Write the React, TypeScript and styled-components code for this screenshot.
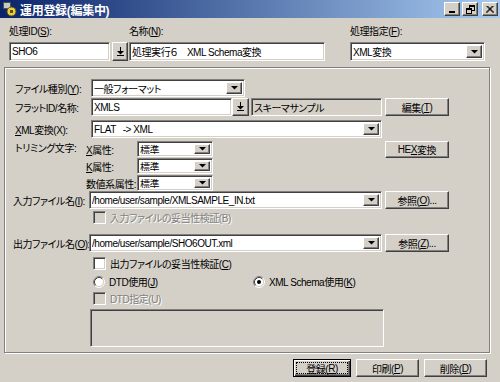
import React from "react";
import styled, { createGlobalStyle, css } from "styled-components";

const face = "#d4d0c8";

const GlobalStyle = createGlobalStyle`
  * { box-sizing: border-box; }
  html, body { margin: 0; padding: 0; background: ${face}; }
  body {
    font-family: "Liberation Sans", "Noto Sans CJK JP", sans-serif;
    font-size: 10px;
    letter-spacing: -0.45px;
    font-feature-settings: "palt";
    color: #000;
  }
  u { text-underline-offset: 1px; }
`;

const raised = css`
  background: ${face};
  border: 1px solid;
  border-color: #fff #404040 #404040 #fff;
  box-shadow: inset -1px -1px #808080;
`;

const sunken = css`
  border: 1px solid;
  border-color: #808080 #fff #fff #808080;
  box-shadow: inset 1px 1px #404040, inset -1px -1px ${face};
`;

const Window = styled.div`
  width: 500px;
  height: 382px;
  display: flex;
  flex-direction: column;
  background: ${face};
  overflow: hidden;
`;

const TitleBar = styled.div`
  height: 18px;
  flex: none;
  display: flex;
  align-items: center;
  gap: 2px;
  padding: 0 2px;
  background: linear-gradient(to right, #0a246a, #a6caf0);
`;

const TitleText = styled.div`
  flex: 1;
  color: #fff;
  font-weight: bold;
  font-size: 12px;
  letter-spacing: -0.3px;
  white-space: nowrap;
`;

const CaptionButton = styled.div<{ $gap?: boolean }>`
  ${raised}
  width: 16px;
  height: 14px;
  display: flex;
  align-items: center;
  justify-content: center;
  margin-left: ${(p) => (p.$gap ? 2 : 0)}px;
`;

const TopRow = styled.div`
  display: flex;
  padding: 7px 0 0 9px;
`;

const Field = styled.div<{ $w: number; $ml?: number }>`
  width: ${(p) => p.$w}px;
  margin-left: ${(p) => p.$ml ?? 0}px;
  display: flex;
  flex-direction: column;
  gap: 4px;
`;

const FieldLabel = styled.div`
  height: 13px;
  line-height: 13px;
  white-space: nowrap;
`;

const Inline = styled.div`
  display: flex;
  align-items: stretch;
`;

const TextBox = styled.div<{ $w?: number; $h?: number; $grey?: boolean; $ml?: number }>`
  ${sunken}
  background: ${(p) => (p.$grey ? face : "#fff")};
  height: ${(p) => p.$h ?? 18}px;
  ${(p) => (p.$w ? `width: ${p.$w}px; flex: none;` : "flex: 1;")}
  margin-left: ${(p) => p.$ml ?? 0}px;
  display: flex;
  align-items: center;
  padding: 0 2px;
  white-space: pre;
  overflow: hidden;
`;

const ComboBox = styled.div<{ $w?: number; $h?: number }>`
  ${sunken}
  background: #fff;
  height: ${(p) => p.$h ?? 18}px;
  ${(p) => (p.$w ? `width: ${p.$w}px;` : "width: 100%;")}
  display: flex;
  align-items: stretch;
  padding: 2px;
`;

const ComboText = styled.div`
  flex: 1;
  display: flex;
  align-items: center;
  white-space: pre;
  overflow: hidden;
`;

const DropButton = styled.div`
  ${raised}
  width: 16px;
  flex: none;
  display: flex;
  align-items: center;
  justify-content: center;
`;

const PickButton = styled.div<{ $w?: number }>`
  ${raised}
  width: ${(p) => p.$w ?? 17}px;
  flex: none;
  display: flex;
  align-items: center;
  justify-content: center;
`;

const Group = styled.div`
  margin: 6px 0 0 4px;
  width: 486px;
  height: 286px;
  flex: none;
  border: 1px solid #808080;
  box-shadow: inset 1px 1px #fff, 1px 1px #fff;
  padding: 11px 40px 0 10px;
  display: flex;
  flex-direction: column;
`;

const Row = styled.div<{ $label: number; $mt?: number }>`
  display: grid;
  grid-template-columns: ${(p) => p.$label}px 1fr 67px;
  align-items: center;
  margin-top: ${(p) => p.$mt ?? 0}px;
`;

const RowLabel = styled.div<{ $top?: boolean; $ml?: number }>`
  white-space: nowrap;
  margin-left: ${(p) => p.$ml ?? 0}px;
  ${(p) => p.$top && "align-self: start; line-height: 16px;"}
`;

const Main = styled.div`
  display: flex;
  align-items: stretch;
`;

const TrimGrid = styled.div`
  display: grid;
  grid-template-columns: 51px 76px;
  grid-auto-rows: 16px;
  row-gap: 1px;
  align-items: center;
`;

const Button = styled.div<{ $w: number; $h?: number; $default?: boolean; $top?: boolean }>`
  width: ${(p) => p.$w}px;
  height: ${(p) => p.$h ?? 18}px;
  justify-self: end;
  ${(p) => p.$top && "align-self: start;"}
  display: flex;
  align-items: stretch;
  white-space: nowrap;
  ${(p) =>
    p.$default
      ? css`
          background: ${face};
          border: 1px solid #000;
          box-shadow: inset 1px 1px #fff, inset -1px -1px #404040, inset -2px -2px #808080;
          padding: 3px;
        `
      : raised}
`;

const ButtonFace = styled.div<{ $focus?: boolean }>`
  flex: 1;
  display: flex;
  align-items: center;
  justify-content: center;
  ${(p) => p.$focus && "outline: 1px dotted #000;"}
`;

const CheckRow = styled.div<{ $mt: number }>`
  display: flex;
  align-items: center;
  height: 13px;
  margin: ${(p) => p.$mt}px 0 0 78px;
`;

const Option = styled.div<{ $w?: number }>`
  display: flex;
  align-items: center;
  gap: 4px;
  ${(p) => p.$w && `width: ${p.$w}px;`}
`;

const CheckBox = styled.div<{ $disabled?: boolean }>`
  ${sunken}
  width: 13px;
  height: 13px;
  flex: none;
  background: ${(p) => (p.$disabled ? face : "#fff")};
`;

const OptionText = styled.span<{ $disabled?: boolean }>`
  white-space: nowrap;
  ${(p) => p.$disabled && "color: #808080; text-shadow: 1px 1px #fff;"}
`;

const Memo = styled.div`
  ${sunken}
  background: ${face};
  width: 294px;
  height: 38px;
  margin: 4px 0 0 75px;
`;

const Footer = styled.div`
  display: flex;
  justify-content: flex-end;
  gap: 5px;
  padding: 6px 13px 0 0;
`;

const Triangle = () => (
  <svg width="7" height="4" viewBox="0 0 7 4">
    <polygon points="0,0 7,0 3.5,3.5" fill="#000" />
  </svg>
);

const PickIcon = () => (
  <svg width="9" height="10" viewBox="0 0 9 10">
    <rect x="4" y="0" width="1" height="4" fill="#000" />
    <polygon points="1,4 8,4 4.5,7.5" fill="#000" />
    <rect x="1" y="8" width="7" height="1" fill="#000" />
  </svg>
);

const Radio = ({ checked }: { checked?: boolean }) => (
  <svg width="12" height="12" viewBox="0 0 12 12">
    <circle cx="6" cy="6" r="4.5" fill="#fff" />
    <path d="M2.11 9.89A5.5 5.5 0 0 1 9.89 2.11" stroke="#808080" fill="none" />
    <path d="M9.89 2.11A5.5 5.5 0 0 1 2.11 9.89" stroke="#fff" fill="none" />
    <path d="M2.82 9.18A4.5 4.5 0 0 1 9.18 2.82" stroke="#404040" fill="none" />
    <path d="M9.18 2.82A4.5 4.5 0 0 1 2.82 9.18" stroke={face} fill="none" />
    {checked && <circle cx="6" cy="6" r="2" fill="#000" />}
  </svg>
);

const AppIcon = () => (
  <svg width="16" height="16" viewBox="0 0 16 16">
    <rect x="1.5" y="1.5" width="7" height="6" fill="#c8c8c8" stroke="#505050" />
    <circle cx="9.5" cy="10.5" r="4.5" fill="#e8d040" stroke="#605010" />
    <rect x="8" y="9" width="3" height="3" fill="#605010" />
  </svg>
);

const Combo = ({ value, w, h }: { value: string; w?: number; h?: number }) => (
  <ComboBox $w={w} $h={h}>
    <ComboText>{value}</ComboText>
    <DropButton>
      <Triangle />
    </DropButton>
  </ComboBox>
);

function App() {
  return (
    <Window>
      <GlobalStyle />
      <TitleBar>
        <AppIcon />
        <TitleText>運用登録(編集中)</TitleText>
        <CaptionButton>
          <svg width="8" height="7" viewBox="0 0 8 7">
            <rect x="1" y="5" width="6" height="2" fill="#000" />
          </svg>
        </CaptionButton>
        <CaptionButton>
          <svg width="9" height="9" viewBox="0 0 9 9">
            <rect x="3.5" y="0.5" width="5" height="5" fill="none" stroke="#000" />
            <rect x="3" y="0" width="6" height="2" fill="#000" />
            <rect x="0.5" y="3.5" width="5" height="5" fill={face} stroke="#000" />
            <rect x="0" y="3" width="6" height="2" fill="#000" />
          </svg>
        </CaptionButton>
        <CaptionButton $gap>
          <svg width="8" height="7" viewBox="0 0 8 7">
            <path d="M0.5 0 L7.5 7 M1.5 0 L8 6.5 M7.5 0 L0.5 7 M6.5 0 L0 6.5" stroke="#000" strokeWidth="1" />
          </svg>
        </CaptionButton>
      </TitleBar>

      <TopRow>
        <Field $w={119}>
          <FieldLabel>
            処理ID(<u>S</u>):
          </FieldLabel>
          <Inline>
            <TextBox $w={101} $h={19}>SHO6</TextBox>
            <PickButton $w={16} style={{ marginLeft: 2 }}>
              <PickIcon />
            </PickButton>
          </Inline>
        </Field>
        <Field $w={196} $ml={1}>
          <FieldLabel>
            名称(<u>N</u>):
          </FieldLabel>
          <TextBox $h={19}>処理実行６　XML Schema変換</TextBox>
        </Field>
        <Field $w={135} $ml={25}>
          <FieldLabel>
            処理指定(<u>F</u>):
          </FieldLabel>
          <Combo value="XML変換" h={19} />
        </Field>
      </TopRow>

      <Group>
        <Row $label={76}>
          <RowLabel>
            ファイル種別(<u>Y</u>):
          </RowLabel>
          <Main>
            <Combo value="一般フォーマット" w={154} />
          </Main>
        </Row>

        <Row $label={76} $mt={1}>
          <RowLabel>フラットID/名称:</RowLabel>
          <Main>
            <TextBox $w={141}>XMLS</TextBox>
            <PickButton>
              <PickIcon />
            </PickButton>
            <TextBox $grey $ml={2}>スキーマサンプル</TextBox>
          </Main>
          <Button $w={64}>
            <ButtonFace>
              編集(<u>T</u>)
            </ButtonFace>
          </Button>
        </Row>

        <Row $label={76} $mt={4}>
          <RowLabel>
            <u>X</u>ML変換(X):
          </RowLabel>
          <Main>
            <Combo value="FLAT   -> XML" />
          </Main>
        </Row>

        <Row $label={71} $mt={3}>
          <RowLabel $top>トリミング文字:</RowLabel>
          <TrimGrid>
            <span>
              <u>X</u>属性:
            </span>
            <Combo value="標準" h={16} />
            <span>
              <u>K</u>属性:
            </span>
            <Combo value="標準" h={16} />
            <span>数値系属性:</span>
            <Combo value="標準" h={16} />
          </TrimGrid>
          <Button $w={64} $h={17} $top>
            <ButtonFace>
              HE<u>X</u>変換
            </ButtonFace>
          </Button>
        </Row>

        <Row $label={74}>
          <RowLabel $ml={-2}>
            入力ファイル名(<u>I</u>):
          </RowLabel>
          <Main>
            <Combo value="/home/user/sample/XMLSAMPLE_IN.txt" />
          </Main>
          <Button $w={64}>
            <ButtonFace>
              参照(<u>O</u>)...
            </ButtonFace>
          </Button>
        </Row>

        <CheckRow $mt={2}>
          <Option>
            <CheckBox $disabled />
            <OptionText $disabled>入力ファイルの妥当性検証(B)</OptionText>
          </Option>
        </CheckRow>

        <Row $label={74} $mt={10}>
          <RowLabel $ml={-2}>
            出力ファイル名(<u>O</u>):
          </RowLabel>
          <Main>
            <Combo value="/home/user/sample/SHO6OUT.xml" />
          </Main>
          <Button $w={64}>
            <ButtonFace>
              参照(<u>Z</u>)...
            </ButtonFace>
          </Button>
        </Row>

        <CheckRow $mt={5}>
          <Option>
            <CheckBox />
            <OptionText>
              出力ファイルの妥当性検証(<u>C</u>)
            </OptionText>
          </Option>
        </CheckRow>

        <CheckRow $mt={5}>
          <Option $w={160}>
            <Radio />
            <OptionText>
              DTD使用(<u>J</u>)
            </OptionText>
          </Option>
          <Option>
            <Radio checked />
            <OptionText>
              XML Schema使用(<u>K</u>)
            </OptionText>
          </Option>
        </CheckRow>

        <CheckRow $mt={4}>
          <Option>
            <CheckBox $disabled />
            <OptionText $disabled>DTD指定(U)</OptionText>
          </Option>
        </CheckRow>

        <Memo />
      </Group>

      <Footer>
        <Button $w={58} $default>
          <ButtonFace $focus>
            登録(<u>R</u>)
          </ButtonFace>
        </Button>
        <Button $w={63}>
          <ButtonFace>
            印刷(<u>P</u>)
          </ButtonFace>
        </Button>
        <Button $w={63}>
          <ButtonFace>
            削除(<u>D</u>)
          </ButtonFace>
        </Button>
      </Footer>
    </Window>
  );
}

export default App;
